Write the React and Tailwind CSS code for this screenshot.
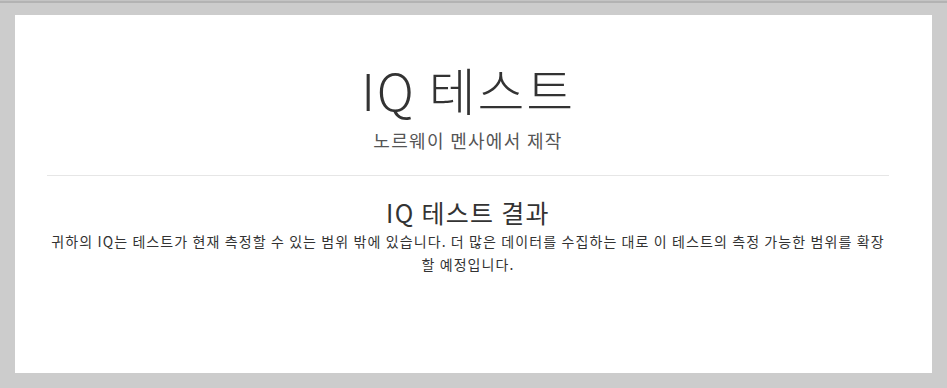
import React from "react";

const font = { fontFamily: '"Noto Sans CJK KR", "Noto Sans", sans-serif' };

export default function App() {
  return (
    <div className="w-[947px] h-[388px] bg-[#cccccc] flex flex-col" style={font}>
      <div className="h-[1px] bg-[#c4c4c4]" />
      <div className="h-[2px] bg-[#b3b3b3]" />
      <div className="flex-1 px-[15px] pt-[12px] pb-[15px] flex">
        <div className="flex-1 bg-white pl-[32px] pr-[43px] flex flex-col items-center text-[#333333]">
          <h1 className="mt-[44px] text-[51px] leading-[60px] font-light tracking-[1.8px]">IQ 테스트</h1>
          <p className="mt-[9px] text-[18px] leading-[24px] text-[#555555] tracking-[1.3px]">노르웨이 멘사에서 제작</p>
          <div className="mt-[23px] w-full h-px bg-[#e6e6e6]" />
          <h2 className="mt-[20px] text-[25px] leading-[32px] tracking-[1.3px]">IQ 테스트 결과</h2>
          <p className="mt-[2px] text-[14px] leading-[23px] text-center tracking-[1.1px]">
            귀하의 IQ는 테스트가 현재 측정할 수 있는 범위 밖에 있습니다. 더 많은 데이터를 수집하는 대로 이 테스트의 측정 가능한 범위를 확장할 예정입니다.
          </p>
        </div>
      </div>
    </div>
  );
}
